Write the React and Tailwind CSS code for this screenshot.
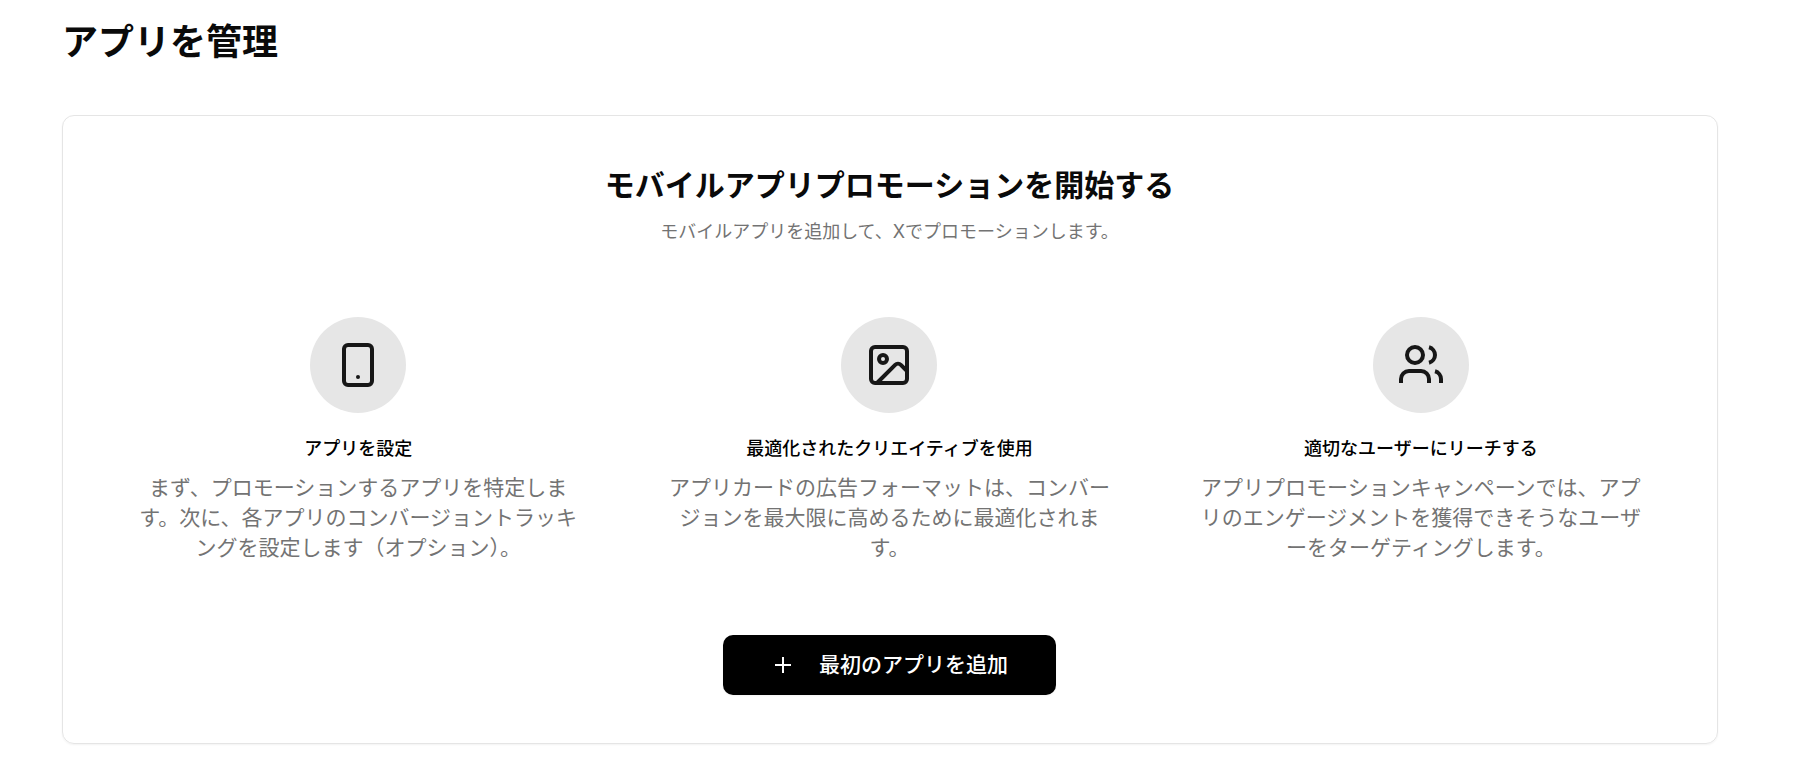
import { Smartphone, Image, Users, Plus } from "lucide-react";

const features = [
  {
    icon: Smartphone,
    lineCap: "round",
    title: "アプリを設定",
    text: "まず、プロモーションするアプリを特定します。次に、各アプリのコンバージョントラッキングを設定します（オプション）。",
  },
  {
    icon: Image,
    lineCap: "round",
    title: "最適化されたクリエイティブを使用",
    text: "アプリカードの広告フォーマットは、コンバージョンを最大限に高めるために最適化されます。",
  },
  {
    icon: Users,
    lineCap: "butt",
    title: "適切なユーザーにリーチする",
    text: "アプリプロモーションキャンペーンでは、アプリのエンゲージメントを獲得できそうなユーザーをターゲティングします。",
  },
];

function Feature({ icon: Icon, lineCap, title, text }) {
  return (
    <div className="flex flex-col items-center text-center">
      <div className="flex size-24 items-center justify-center rounded-full bg-[#e6e6e6] text-[#171717]">
        <Icon className="size-12" strokeLinecap={lineCap} aria-hidden="true" />
      </div>
      <h3 className="mt-6 text-lg leading-6 font-medium">{title}</h3>
      <p className="mt-3 text-[21px] leading-[30px] text-[#737373]">{text}</p>
    </div>
  );
}

export default function App() {
  return (
    <main
      lang="ja"
      className="bg-white pt-5 pr-[75px] pb-6 pl-[62px] font-['Inter','Noto_Sans_CJK_JP',sans-serif] text-black"
    >
      <h1 className="text-4xl leading-[45px] font-bold text-[#0a0a0a]">アプリを管理</h1>
      <section className="mt-[50px] rounded-xl border border-[#e5e5e5] py-12 pr-[73px] pl-[72px] shadow-xs">
        <header className="text-center">
          <h2 className="text-[30px] leading-[42px] font-bold text-[#0a0a0a]">
            モバイルアプリプロモーションを開始する
          </h2>
          <p className="mt-3 text-lg leading-7 text-[#737373]">
            モバイルアプリを追加して、Xでプロモーションします。
          </p>
        </header>
        <div className="mt-[71px] grid grid-cols-3 gap-[85px]">
          {features.map((feature) => (
            <Feature key={feature.title} {...feature} />
          ))}
        </div>
        <div className="mt-[72px] flex justify-center">
          <button
            type="button"
            className="flex h-[60px] items-center gap-6 rounded-[10px] bg-black px-12 text-[21px] font-medium text-white shadow-xs"
          >
            <Plus className="size-6" strokeLinecap="square" strokeWidth={2} aria-hidden="true" />
            最初のアプリを追加
          </button>
        </div>
      </section>
    </main>
  );
}
